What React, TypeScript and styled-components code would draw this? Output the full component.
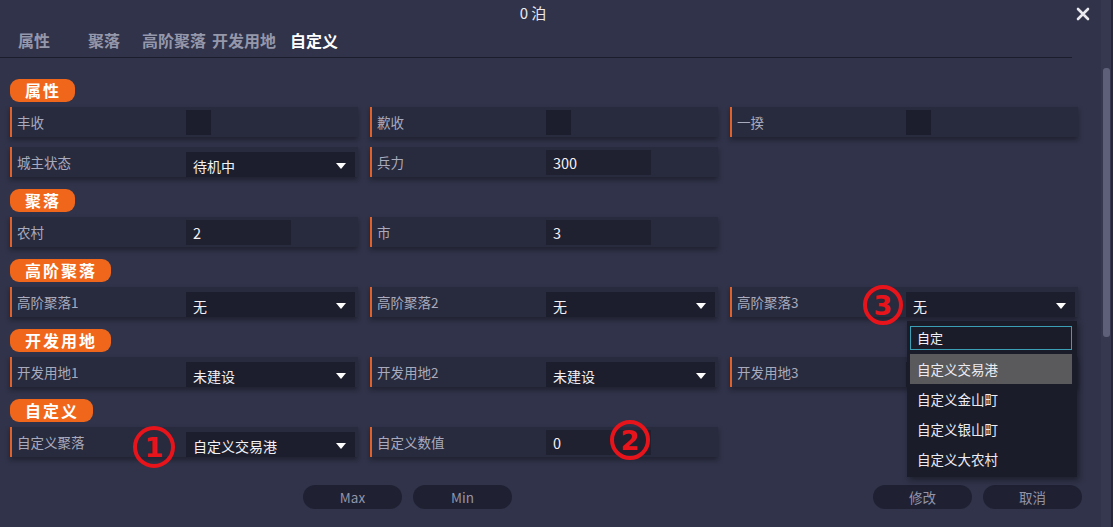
import React, { FunctionComponent } from "react";
import styled, { createGlobalStyle } from "styled-components";

const GlobalStyle = createGlobalStyle`
  html, body {
    margin: 0;
    padding: 0;
    background: #303349;
  }
  body {
    font-family: "Noto Sans CJK SC", "Noto Sans", sans-serif;
  }
`;

const Page = styled.div`
  width: 1113px;
  height: 527px;
  display: flex;
  background: #303349;
  overflow: hidden;
`;

const Main = styled.div`
  flex: 1;
  display: flex;
  flex-direction: column;
  min-width: 0;
`;

const TitleRow = styled.header`
  height: 25px;
  display: flex;
  align-items: center;
`;

const Title = styled.div`
  flex: 1;
  text-align: center;
  padding-right: 5px;
  color: #e9e9ef;
  font-size: 15px;
`;

const CloseButton = styled.button`
  width: 24px;
  height: 24px;
  margin: 3px 6px 0 0;
  padding: 0;
  border: none;
  background: none;
  display: flex;
  align-items: center;
  justify-content: center;
`;

const Tabs = styled.nav`
  height: 30px;
  display: flex;
  margin-left: -1px;
`;

const Tab = styled.div<{ $active?: boolean }>`
  width: 70px;
  text-align: center;
  line-height: 30px;
  font-size: 16px;
  font-weight: 700;
  color: ${(p) => (p.$active ? "#ffffff" : "#9597ab")};
  white-space: nowrap;
`;

const Divider = styled.div`
  height: 1px;
  margin: 2px 29px 0 0;
  background: #1b1c2c;
`;

const Content = styled.main`
  padding: 21px 0 0 10px;
  display: flex;
  flex-direction: column;
  gap: 12px;
`;

const Section = styled.section`
  display: flex;
  flex-direction: column;
  align-items: flex-start;
`;

const Badge = styled.div`
  height: 23px;
  line-height: 23px;
  padding: 0 14px 0 15px;
  margin-bottom: 5px;
  border-radius: 9px;
  background: #f0671c;
  color: #ffffff;
  font-size: 16px;
  font-weight: 700;
  letter-spacing: 2px;
`;

const Grid = styled.div`
  display: grid;
  grid-template-columns: repeat(3, 348px);
  gap: 10px 12px;
`;

const Field = styled.div`
  position: relative;
  height: 30px;
  display: flex;
  border-left: 2px solid #e0622a;
  background: #282a3d;
  box-shadow: 0 3px 5px rgba(0, 0, 0, 0.35);
`;

const Label = styled.div`
  width: 174px;
  padding-left: 5px;
  box-sizing: border-box;
  line-height: 31px;
  font-size: 13.5px;
  color: #a8aabe;
  white-space: nowrap;
`;

const Check = styled.div`
  width: 25px;
  height: 25px;
  margin-top: 3px;
  background: #1d1e2d;
`;

const Input = styled.div`
  width: 105px;
  height: 25px;
  margin-top: 3px;
  padding-left: 7px;
  box-sizing: border-box;
  line-height: 25px;
  background: #1f2030;
  color: #f2f2f6;
  font-size: 14.5px;
`;

const Select = styled.div`
  width: 169px;
  height: 25px;
  margin-top: 5px;
  padding: 2px 9px 0 7px;
  box-sizing: border-box;
  display: flex;
  align-items: center;
  justify-content: space-between;
  background: #1d1e2d;
  color: #f2f2f6;
  font-size: 14px;
`;

const Arrow = styled.span`
  width: 0;
  height: 0;
  margin-left: auto;
  border-left: 5px solid transparent;
  border-right: 5px solid transparent;
  border-top: 6px solid #ffffff;
`;

const Dropdown = styled.div`
  position: absolute;
  left: 175px;
  top: 34px;
  z-index: 5;
  width: 170px;
  height: 156px;
  padding: 5px 5px 0 3px;
  box-sizing: border-box;
  background: #1b1c2a;
  box-shadow: 2px 3px 6px rgba(0, 0, 0, 0.4);
`;

const Search = styled.div`
  height: 24px;
  margin-bottom: 4px;
  padding-left: 6px;
  border: 1px solid #3b9fb5;
  box-sizing: border-box;
  line-height: 22px;
  color: #f2f2f6;
  font-size: 13px;
`;

const Option = styled.div<{ $active?: boolean }>`
  height: 30px;
  line-height: 30px;
  padding-left: 7px;
  background: ${(p) => (p.$active ? "#5a5a5c" : "transparent")};
  color: #ececf2;
  font-size: 13.5px;
`;

const Marker = styled.div<{ $x: number; $y: number; $size: number }>`
  position: absolute;
  left: ${(p) => p.$x - p.$size / 2}px;
  top: ${(p) => p.$y - p.$size / 2}px;
  z-index: 6;
  width: ${(p) => p.$size}px;
  height: ${(p) => p.$size}px;
  box-sizing: border-box;
  border: 4px solid #e8141b;
  border-radius: 50%;
  display: flex;
  align-items: center;
  justify-content: center;
  color: #e8141b;
  font-family: "DejaVu Sans", "Liberation Sans", sans-serif;
  font-size: 27px;
  font-weight: 900;
  line-height: 1;
`;

const ButtonRow = styled.footer`
  margin-top: 28px;
  padding: 0 19px 0 303px;
  display: flex;
  justify-content: space-between;
`;

const ButtonGroup = styled.div`
  display: flex;
  gap: 11px;
`;

const Button = styled.button`
  width: 99px;
  height: 24px;
  padding: 0;
  border: none;
  border-radius: 12px;
  background: #1f2133;
  color: #9295aa;
  font-family: "Noto Sans CJK SC", "Noto Sans", sans-serif;
  font-size: 13.5px;
`;

const Scrollbar = styled.div`
  width: 12px;
  background: #35384e;
  border-right: 2px solid #26283a;
  box-sizing: border-box;
`;

const Thumb = styled.div`
  width: 7px;
  height: 269px;
  margin: 68px 0 0 2px;
  border-radius: 3px;
  background: #5d6078;
`;

const CloseIcon = () => (
  <svg width="14" height="14" viewBox="0 0 14 14">
    <path d="M2 2L12 12M12 2L2 12" stroke="#e8e8ee" strokeWidth="2.6" strokeLinecap="round" />
  </svg>
);

const SelectBox: FunctionComponent<{ value?: string }> = ({ value }) => (
  <Select>
    {value && <span>{value}</span>}
    <Arrow />
  </Select>
);

const App: FunctionComponent = () => {
  return (
    <>
      <GlobalStyle />
      <Page>
        <Main>
          <TitleRow>
            <Title>0 泊</Title>
            <CloseButton>
              <CloseIcon />
            </CloseButton>
          </TitleRow>
          <Tabs>
            <Tab>属性</Tab>
            <Tab>聚落</Tab>
            <Tab>高阶聚落</Tab>
            <Tab>开发用地</Tab>
            <Tab $active>自定义</Tab>
          </Tabs>
          <Divider />
          <Content>
            <Section>
              <Badge>属性</Badge>
              <Grid>
                <Field>
                  <Label>丰收</Label>
                  <Check />
                </Field>
                <Field>
                  <Label>歉收</Label>
                  <Check />
                </Field>
                <Field>
                  <Label>一揆</Label>
                  <Check />
                </Field>
                <Field>
                  <Label>城主状态</Label>
                  <SelectBox value="待机中" />
                </Field>
                <Field>
                  <Label>兵力</Label>
                  <Input>300</Input>
                </Field>
              </Grid>
            </Section>
            <Section>
              <Badge>聚落</Badge>
              <Grid>
                <Field>
                  <Label>农村</Label>
                  <Input>2</Input>
                </Field>
                <Field>
                  <Label>市</Label>
                  <Input>3</Input>
                </Field>
              </Grid>
            </Section>
            <Section>
              <Badge>高阶聚落</Badge>
              <Grid>
                <Field>
                  <Label>高阶聚落1</Label>
                  <SelectBox value="无" />
                </Field>
                <Field>
                  <Label>高阶聚落2</Label>
                  <SelectBox value="无" />
                </Field>
                <Field>
                  <Label>高阶聚落3</Label>
                  <SelectBox value="无" />
                  <Marker $x={151} $y={18} $size={40}>3</Marker>
                  <Dropdown>
                    <Search>自定</Search>
                    <Option $active>自定义交易港</Option>
                    <Option>自定义金山町</Option>
                    <Option>自定义银山町</Option>
                    <Option>自定义大农村</Option>
                  </Dropdown>
                </Field>
              </Grid>
            </Section>
            <Section>
              <Badge>开发用地</Badge>
              <Grid>
                <Field>
                  <Label>开发用地1</Label>
                  <SelectBox value="未建设" />
                </Field>
                <Field>
                  <Label>开发用地2</Label>
                  <SelectBox value="未建设" />
                </Field>
                <Field>
                  <Label>开发用地3</Label>
                  {/* covered by the open dropdown above */}
                  <SelectBox />
                </Field>
              </Grid>
            </Section>
            <Section>
              <Badge>自定义</Badge>
              <Grid>
                <Field>
                  <Label>自定义聚落</Label>
                  <SelectBox value="自定义交易港" />
                  <Marker $x={142} $y={20} $size={42}>1</Marker>
                </Field>
                <Field>
                  <Label>自定义数值</Label>
                  <Input>0</Input>
                  <Marker $x={258} $y={13} $size={40}>2</Marker>
                </Field>
              </Grid>
            </Section>
          </Content>
          <ButtonRow>
            <ButtonGroup>
              <Button>Max</Button>
              <Button>Min</Button>
            </ButtonGroup>
            <ButtonGroup>
              <Button>修改</Button>
              <Button>取消</Button>
            </ButtonGroup>
          </ButtonRow>
        </Main>
        <Scrollbar>
          <Thumb />
        </Scrollbar>
      </Page>
    </>
  );
};

export default App;
